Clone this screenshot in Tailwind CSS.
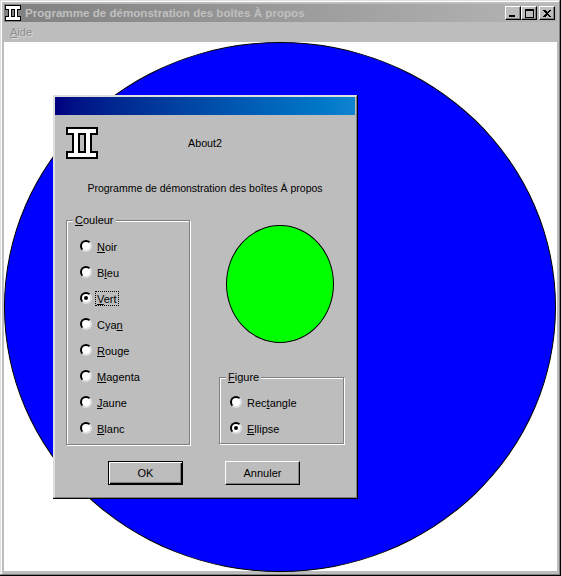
<!DOCTYPE html>
<html lang="fr">
<head>
  <meta charset="UTF-8">
  <title>Programme de démonstration des boîtes À propos</title>
  <script src="https://cdn.jsdelivr.net/npm/@tailwindcss/browser@4"></script>
</head>
<body class="w-[561px] h-[576px] overflow-hidden bg-[#bdbdbd] font-['Liberation_Sans',Arial,sans-serif] text-[11px] leading-none text-black">
  <!-- main window -->
  <div class="w-[561px] h-[576px] flex flex-col border-r border-b border-black">
    <div class="flex-1 flex flex-col border-t border-l border-r border-b border-t-[#dfdfdf] border-l-[#dfdfdf] border-r-[#808080] border-b-[#808080]">
      <div class="flex-1 flex flex-col border-t border-l border-white p-[2px] pb-[3px] pr-[2px]">
        <!-- title bar -->
        <div class="h-[18px] flex items-center bg-linear-to-r from-[#808080] to-[#b5b5b5] pl-[1px] pr-[2px]">
          <svg class="w-4 h-4 shrink-0" viewBox="0 0 16 16" shape-rendering="crispEdges">
            <path d="M0 0H16V5H13V11H16V16H0V11H3V5H0Z" fill="#000"/>
            <path d="M1 1H15V4H12V12H15V15H1V12H4V4H1Z" fill="#fff"/>
            <path d="M6 4H10V12H6Z" fill="#000"/>
            <path d="M7 5H9V11H7Z" fill="#808080"/>
          </svg>
          <span class="ml-1 font-bold text-[11.6px] text-[#c0c0c0] whitespace-nowrap">Programme de démonstration des boîtes À propos</span>
          <div class="ml-auto flex items-center">
            <button class="w-4 h-[14px] flex items-end justify-center pb-[2px] pr-[2px] bg-[#bdbdbd] border border-t-white border-l-white border-r-black border-b-black shadow-[inset_-1px_-1px_0_#808080]"><span class="block w-[6px] h-[2px] bg-black"></span></button>
            <button class="w-4 h-[14px] flex items-center justify-center bg-[#bdbdbd] border border-t-white border-l-white border-r-black border-b-black shadow-[inset_-1px_-1px_0_#808080]"><span class="block w-[9px] h-[9px] border border-t-2 border-black"></span></button>
            <button class="ml-[2px] w-4 h-[14px] flex items-center justify-center bg-[#bdbdbd] border border-t-white border-l-white border-r-black border-b-black shadow-[inset_-1px_-1px_0_#808080]">
              <svg class="w-2 h-[7px]" viewBox="0 0 8 7" shape-rendering="crispEdges"><path d="M0 0H2L4 2L6 0H8V1L5 3.5L8 6V7H6L4 5L2 7H0V6L3 3.5L0 1Z" fill="#000"/></svg>
            </button>
          </div>
        </div>
        <!-- menu bar -->
        <div class="h-[20px] flex items-center pl-[6px] text-[#8c8c8c] [text-shadow:1px_1px_0_#d8d8d8]"><span><span class="underline">A</span>ide</span></div>
        <!-- client area -->
        <div class="relative flex-1 bg-white">
          <div class="absolute left-0 top-0 w-[552px] h-[530px] rounded-[50%] bg-[#0000ff] border border-black"></div>

          <!-- about dialog -->
          <div class="absolute left-[49px] top-[53px] w-[305px] h-[404px] flex flex-col bg-[#bdbdbd] border-r border-b border-black">
            <div class="flex-1 flex flex-col border-t-2 border-l-2 border-r border-b border-t-[#dfdfdf] border-l-[#dfdfdf] border-r-[#808080] border-b-[#808080] pr-[1px] pb-[1px]">
              <div class="h-[18px] shrink-0 bg-linear-to-r from-[#000080] to-[#1084d0]"></div>
              <div class="flex-1 flex flex-col pl-[11px] pr-[11px]">
                <div class="flex items-start pt-[12px]">
                  <svg class="w-8 h-8 shrink-0" viewBox="0 0 32 32" shape-rendering="crispEdges">
                    <path d="M0 0H32V8H26V24H32V32H0V24H6V8H0Z" fill="#000"/>
                    <path d="M2 2H30V6H24V26H30V30H2V26H8V6H2Z" fill="#fff"/>
                    <path d="M12 6H20V26H12Z" fill="#000"/>
                    <path d="M14 8H18V24H14Z" fill="#bdbdbd"/>
                  </svg>
                  <p class="flex-1 text-center pt-[11px] pr-[32px] text-[10.7px]">About2</p>
                </div>
                <p class="mt-[24px] h-3 text-center whitespace-nowrap text-[10.5px]">Programme de démonstration des boîtes À propos</p>
                <div class="mt-[25px] flex items-start">
                  <!-- couleur -->
                  <fieldset class="relative shrink-0 w-[124px] h-[225px] border border-[#808080] shadow-[1px_1px_0_#fff,inset_1px_1px_0_#fff] flex flex-col pt-[12px] pl-[13px]">
                    <legend class="absolute -top-[6px] left-[6px] bg-[#bdbdbd] px-[2px]"><span class="underline">C</span>ouleur</legend>
                    <label class="h-[26px] flex items-center gap-[5px]"><span class="w-3 h-3 rounded-full bg-white border-2 border-t-black border-l-black border-r-[#dfdfdf] border-b-[#dfdfdf]"></span><span class="pt-[2px]"><span class="underline">N</span>oir</span></label>
                    <label class="h-[26px] flex items-center gap-[5px]"><span class="w-3 h-3 rounded-full bg-white border-2 border-t-black border-l-black border-r-[#dfdfdf] border-b-[#dfdfdf]"></span><span class="pt-[2px]">B<span class="underline">l</span>eu</span></label>
                    <label class="h-[26px] flex items-center gap-[5px]"><span class="w-3 h-3 flex items-center justify-center rounded-full bg-white border-2 border-t-black border-l-black border-r-[#dfdfdf] border-b-[#dfdfdf]"><span class="w-1 h-1 rounded-full bg-black"></span></span><span class="-ml-[1px] px-[1px] pt-[2px] outline outline-dotted outline-black"><span class="underline">V</span>ert</span></label>
                    <label class="h-[26px] flex items-center gap-[5px]"><span class="w-3 h-3 rounded-full bg-white border-2 border-t-black border-l-black border-r-[#dfdfdf] border-b-[#dfdfdf]"></span><span class="pt-[2px]">Cya<span class="underline">n</span></span></label>
                    <label class="h-[26px] flex items-center gap-[5px]"><span class="w-3 h-3 rounded-full bg-white border-2 border-t-black border-l-black border-r-[#dfdfdf] border-b-[#dfdfdf]"></span><span class="pt-[2px]"><span class="underline">R</span>ouge</span></label>
                    <label class="h-[26px] flex items-center gap-[5px]"><span class="w-3 h-3 rounded-full bg-white border-2 border-t-black border-l-black border-r-[#dfdfdf] border-b-[#dfdfdf]"></span><span class="pt-[2px]"><span class="underline">M</span>agenta</span></label>
                    <label class="h-[26px] flex items-center gap-[5px]"><span class="w-3 h-3 rounded-full bg-white border-2 border-t-black border-l-black border-r-[#dfdfdf] border-b-[#dfdfdf]"></span><span class="pt-[2px]"><span class="underline">J</span>aune</span></label>
                    <label class="h-[26px] flex items-center gap-[5px]"><span class="w-3 h-3 rounded-full bg-white border-2 border-t-black border-l-black border-r-[#dfdfdf] border-b-[#dfdfdf]"></span><span class="pt-[2px]"><span class="underline">B</span>lanc</span></label>
                  </fieldset>
                  <!-- aperçu + figure -->
                  <div class="ml-[29px] flex flex-col shrink-0">
                    <div class="ml-[7px] mt-[5px] w-[108px] h-[118px] rounded-[50%] bg-[#00ff00] border border-black"></div>
                    <fieldset class="relative mt-[34px] w-[125px] h-[67px] border border-[#808080] shadow-[1px_1px_0_#fff,inset_1px_1px_0_#fff] flex flex-col pt-[11px] pl-[10px]">
                      <legend class="absolute -top-[6px] left-[6px] bg-[#bdbdbd] px-[2px]"><span class="underline">F</span>igure</legend>
                      <label class="h-[26px] flex items-center gap-[5px]"><span class="w-3 h-3 rounded-full bg-white border-2 border-t-black border-l-black border-r-[#dfdfdf] border-b-[#dfdfdf]"></span><span class="pt-[2px]">Rec<span class="underline">t</span>angle</span></label>
                      <label class="h-[26px] flex items-center gap-[5px]"><span class="w-3 h-3 flex items-center justify-center rounded-full bg-white border-2 border-t-black border-l-black border-r-[#dfdfdf] border-b-[#dfdfdf]"><span class="w-1 h-1 rounded-full bg-black"></span></span><span class="pt-[2px]"><span class="underline">E</span>llipse</span></label>
                    </fieldset>
                  </div>
                </div>
                <div class="mt-[16px] flex pl-[42px]">
                  <button class="w-[75px] h-[24px] flex items-center justify-center bg-[#bdbdbd] border border-black shadow-[inset_1px_1px_0_#fff,inset_-1px_-1px_0_#000,inset_-2px_-2px_0_#808080]">OK</button>
                  <button class="ml-[42px] w-[75px] h-[24px] flex items-center justify-center bg-[#bdbdbd] border border-t-white border-l-white border-r-black border-b-black shadow-[inset_-1px_-1px_0_#808080]">Annuler</button>
                </div>
              </div>
            </div>
          </div>
        </div>
      </div>
    </div>
  </div>
</body>
</html>
